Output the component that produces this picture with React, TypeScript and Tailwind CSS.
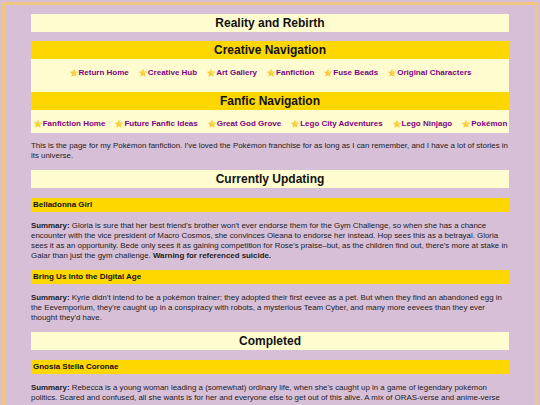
import React from 'react';

const creativeLinks = ['Return Home', 'Creative Hub', 'Art Gallery', 'Fanfiction', 'Fuse Beads', 'Original Characters'];
const fanficLinks = ['Fanfiction Home', 'Future Fanfic Ideas', 'Great God Grove', 'Lego City Adventures', 'Lego Ninjago', 'Pokémon'];

function Star() {
  return (
    <svg width="10" height="10" viewBox="0 0 24 24" className="shrink-0">
      <path
        d="M12 1.5l3.1 6.6 7.2.9-5.3 5 1.4 7.1L12 17.6l-6.4 3.5 1.4-7.1-5.3-5 7.2-.9z"
        fill="#f8cd3a"
      />
      <path d="M12 1.5l3.1 6.6 7.2.9-5.3 5L12 12z" fill="#fbdb62" />
    </svg>
  );
}

function NavRow({ links, className }: { links: string[]; className: string }) {
  return (
    <div className={`flex flex-wrap justify-center gap-x-[9px] bg-[#fffdd0] ${className}`}>
      {links.map((l) => (
        <a key={l} href="#" className="flex h-[10px] items-center text-[8px] font-bold leading-[10px] text-[#800080]">
          <Star />
          {l}
        </a>
      ))}
    </div>
  );
}

function BoxHeading({ children, gold }: { children: React.ReactNode; gold?: boolean }) {
  return (
    <h2
      className={`text-center text-[12px] font-bold leading-[18px] text-[#111] ${gold ? 'bg-[#ffd700]' : 'bg-[#fffdd0]'}`}
    >
      {children}
    </h2>
  );
}

function Story({ title, children }: { title: string; children: React.ReactNode }) {
  return (
    <div>
      <h3 className="mt-[9px] bg-[#ffd700] px-[2px] text-[8px] font-bold leading-[14px] text-[#111]">{title}</h3>
      <p className="mt-[9px] text-[7.9px] leading-[10px] text-[#222]">{children}</p>
    </div>
  );
}

export default function App() {
  return (
    <div className="min-h-screen bg-[#d8bfd8] p-[2px]" style={{ fontFamily: '"Liberation Sans", Arial, sans-serif' }}>
      <div className="border-[3px] border-[#f0c681] px-[26px] pt-[9px] pb-4">
        <BoxHeading>Reality and Rebirth</BoxHeading>

        {/* Creative navigation */}
        <div className="mt-[9px]">
          <BoxHeading gold>Creative Navigation</BoxHeading>
          <NavRow links={creativeLinks} className="pt-[9px] pb-[14px]" />
          <BoxHeading gold>Fanfic Navigation</BoxHeading>
          <NavRow links={fanficLinks} className="pt-[9px] pb-[4px]" />
        </div>

        <p className="mt-[8px] text-[7.9px] leading-[10px] text-[#222]">
          This is the page for my Pokémon fanfiction. I've loved the Pokémon franchise for as long as I can remember, and I
          have a lot of stories in its universe.
        </p>

        <div className="mt-[9px] pb-[1px]">
          <BoxHeading>Currently Updating</BoxHeading>
        </div>

        <Story title="Belladonna Girl">
          <b>Summary:</b> Gloria is sure that her best friend's brother won't ever endorse them for the Gym Challenge, so
          when she has a chance encounter with the vice president of Macro Cosmos, she convinces Oleana to endorse her
          instead. Hop sees this as a betrayal. Gloria sees it as an opportunity. Bede only sees it as gaining competition
          for Rose's praise–but, as the children find out, there's more at stake in Galar than just the gym challenge.{' '}
          <b>Warning for referenced suicide.</b>
        </Story>

        <Story title="Bring Us Into the Digital Age">
          <b>Summary:</b> Kyrie didn't intend to be a pokémon trainer; they adopted their first eevee as a pet. But when
          they find an abandoned egg in the Eevemporium, they're caught up in a conspiracy with robots, a mysterious Team
          Cyber, and many more eevees than they ever thought they'd have.
        </Story>

        <div className="mt-[9px] pb-[1px]">
          <BoxHeading>Completed</BoxHeading>
        </div>

        <Story title="Gnosia Stella Coronae">
          <b>Summary:</b> Rebecca is a young woman leading a (somewhat) ordinary life, when she's caught up in a game of
          legendary pokémon politics. Scared and confused, all she wants is for her and everyone else to get out of this
          alive. A mix of ORAS-verse and anime-verse (particularly the 11th movie).{' '}
          <b>Warnings for violence and character death.</b>
        </Story>
      </div>
    </div>
  );
}
